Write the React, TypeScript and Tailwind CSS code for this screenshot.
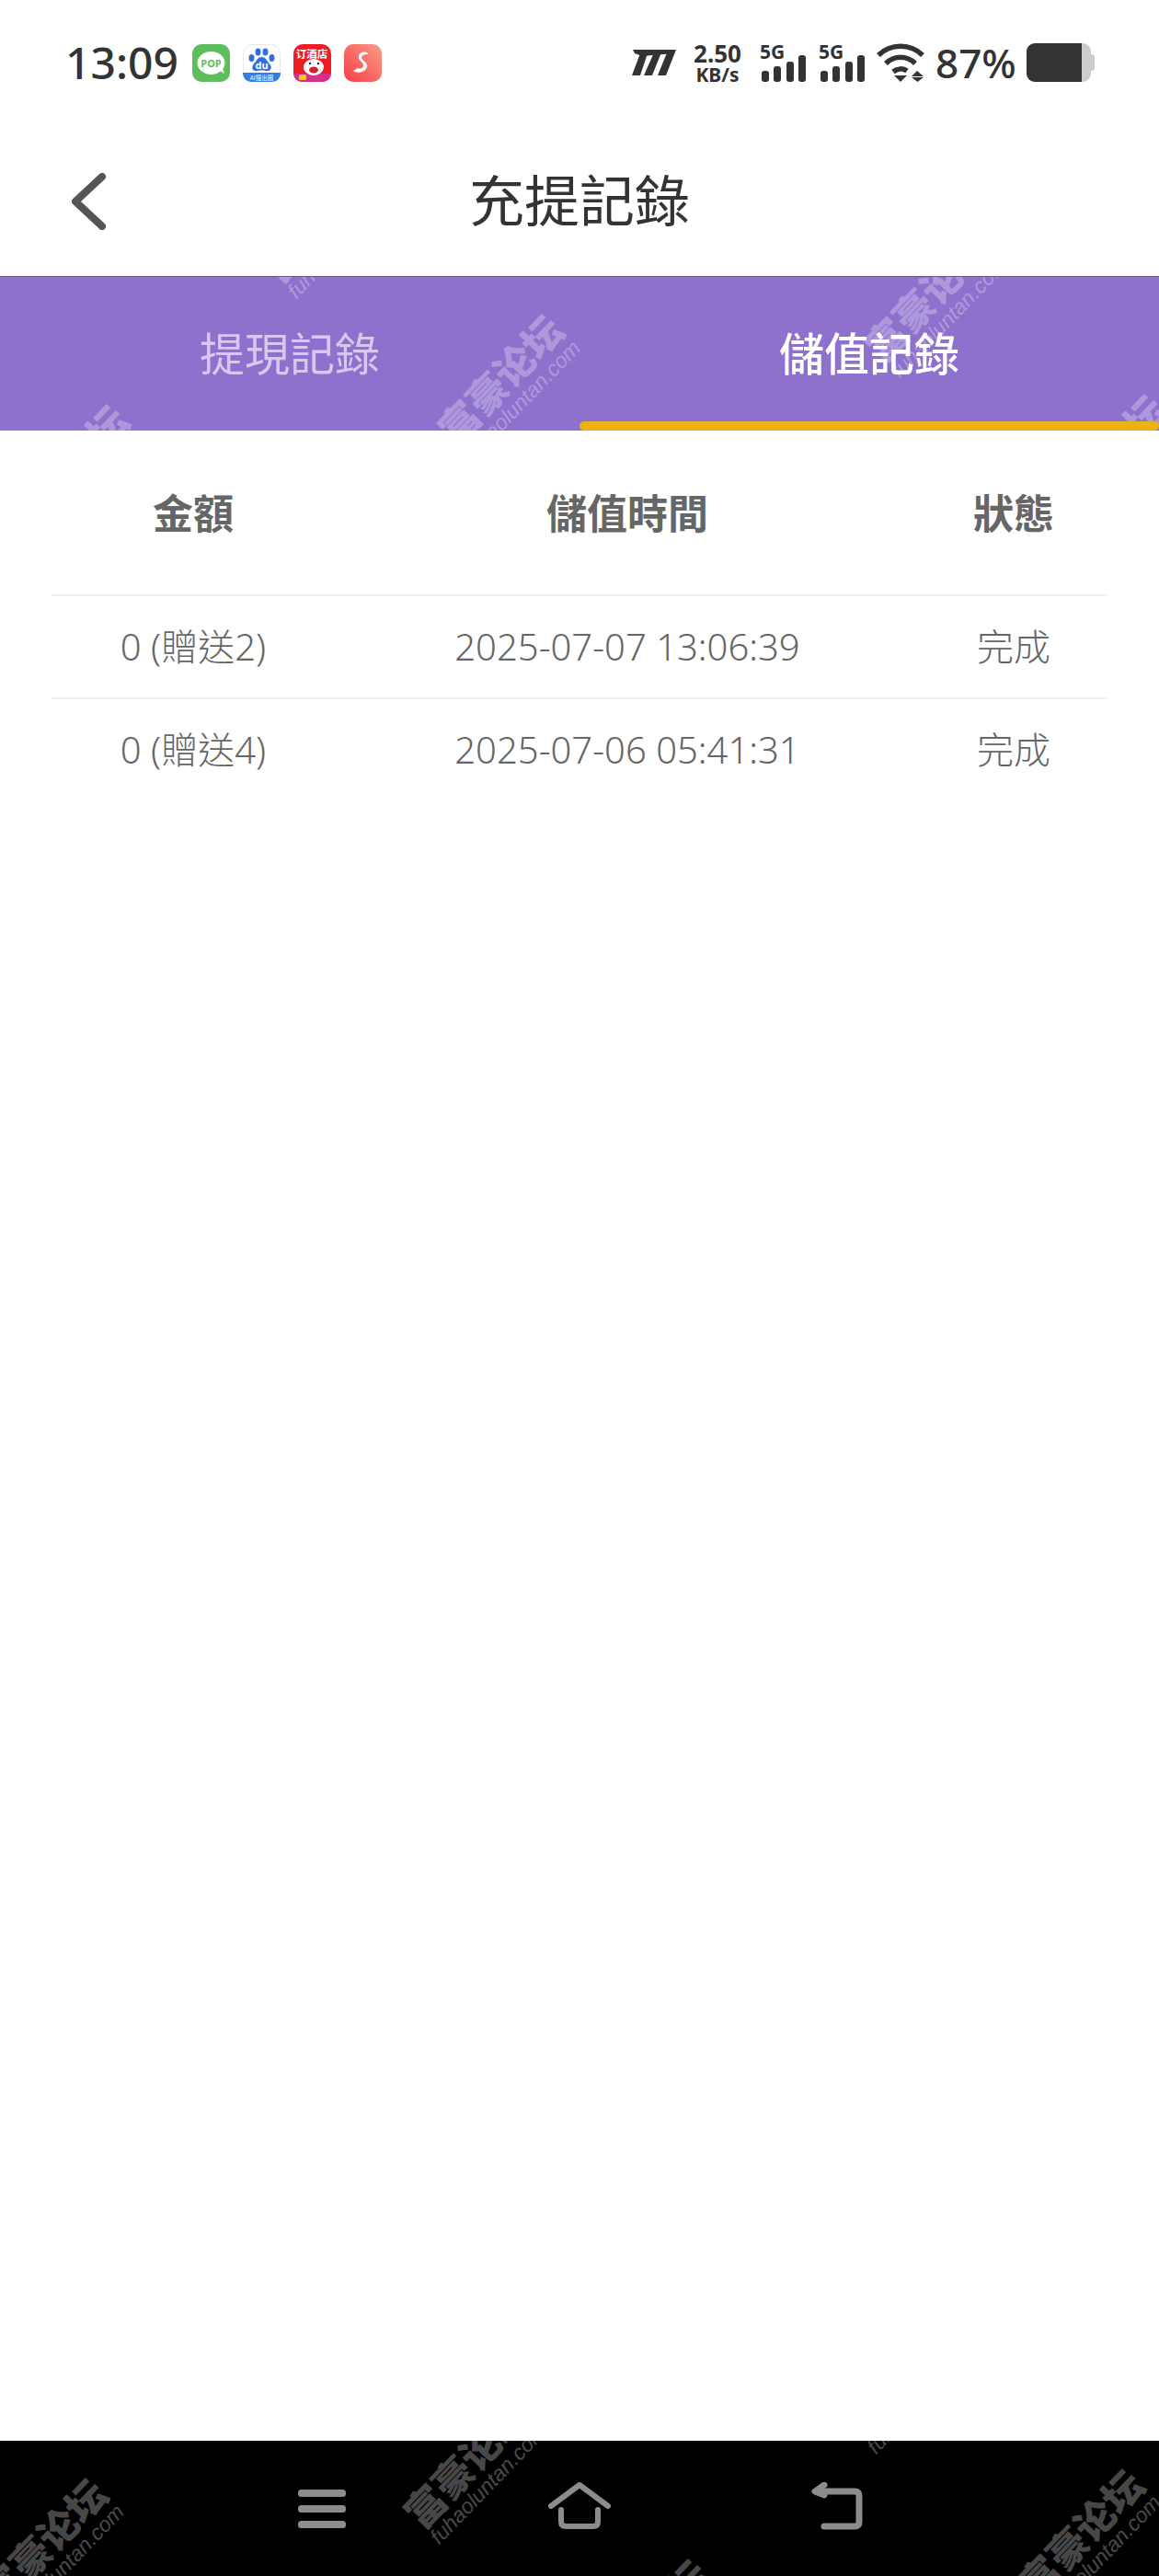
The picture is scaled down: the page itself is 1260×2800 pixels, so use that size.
const records = [
  { amount: "0 (贈送2)", time: "2025-07-07 13:06:39", status: "完成" },
  { amount: "0 (贈送4)", time: "2025-07-06 05:41:31", status: "完成" },
];

function Watermark({ className }: { className: string }) {
  return (
    <div
      className={`pointer-events-none absolute flex w-[190px] -translate-x-1/2 -translate-y-1/2 -rotate-[46deg] flex-col items-center whitespace-nowrap text-white/30 ${className}`}
    >
      <span className="text-[43px] leading-[46px] font-black font-['Noto_Sans_CJK_SC',sans-serif]">富豪论坛</span>
      <span className="text-[23px] leading-[24px] italic font-['Liberation_Sans',sans-serif]">fuhaoluntan.com</span>
    </div>
  );
}

function Signal() {
  return (
    <svg width="50" height="42" viewBox="0 0 50 42" fill="#333">
      <text x="0" y="17" fontSize="21" fontWeight="700" fontFamily="Noto Sans, sans-serif">
        5G
      </text>
      <rect x="2" y="30" width="8" height="12" rx="3" />
      <rect x="15" y="25" width="8" height="17" rx="3" />
      <rect x="29" y="20" width="8" height="22" rx="3" />
      <rect x="42" y="13" width="8" height="29" rx="3" />
    </svg>
  );
}

function AppIcons() {
  return (
    <div className="ml-[15px] flex items-center gap-[14px]">
      <svg width="41" height="41" viewBox="0 0 41 41">
        <rect width="41" height="41" rx="10" fill="#5dbf5c" />
        <ellipse cx="20.5" cy="20.5" rx="15" ry="12.5" fill="#fff" />
        <path d="M29 28l6 4-3-8z" fill="#fff" />
        <text x="20.5" y="25" textAnchor="middle" fontSize="11" fontWeight="700" fill="#5dbf5c" fontFamily="Noto Sans, sans-serif">
          POP
        </text>
      </svg>
      <svg width="41" height="41" viewBox="0 0 41 41">
        <rect x="0.5" y="0.5" width="40" height="40" rx="10" fill="#fff" stroke="#e8e8ee" />
        <path d="M0 31h41v1a9 9 0 0 1-9 9H9a9 9 0 0 1-9-9z" fill="#2f7de8" />
        <ellipse cx="9.5" cy="15" rx="3" ry="4" fill="#2f6fe4" />
        <ellipse cx="16.5" cy="8.5" rx="3" ry="4" fill="#2f6fe4" />
        <ellipse cx="24.5" cy="8.5" rx="3" ry="4" fill="#2f6fe4" />
        <ellipse cx="31.5" cy="15" rx="3" ry="4" fill="#2f6fe4" />
        <path d="M20.5 14c5 0 6 5 9 8 3 4 0 8-4 7-3-.6-7-.6-10 0-4 1-7-3-4-7 3-3 4-8 9-8z" fill="#2f6fe4" />
        <text x="20.5" y="27" textAnchor="middle" fontSize="11" fontWeight="700" fill="#fff" fontFamily="Noto Sans, sans-serif">
          du
        </text>
        <text x="20.5" y="39" textAnchor="middle" fontSize="6.5" fill="#fff" fontFamily="Noto Sans CJK SC, sans-serif">
          AI搜出圈
        </text>
      </svg>
      <svg width="41" height="41" viewBox="0 0 41 41">
        <rect width="41" height="41" rx="10" fill="#ee1c25" />
        <path d="M0 32h41v0a9 9 0 0 1-9 9H9a9 9 0 0 1-9-9z" fill="#d4328a" />
        <text x="20" y="15" textAnchor="middle" fontSize="11.5" fontWeight="700" fill="#fff" fontFamily="Noto Sans CJK SC, sans-serif">
          订酒店
        </text>
        <ellipse cx="22" cy="25" rx="11" ry="9" fill="#fff" />
        <ellipse cx="22" cy="28" rx="5" ry="3.5" fill="#d81e2a" />
        <circle cx="18" cy="21" r="1.2" fill="#222" />
        <circle cx="27" cy="21" r="1.2" fill="#222" />
        <rect x="6" y="33" width="8" height="6" rx="1.5" fill="#f4c430" />
      </svg>
      <svg width="41" height="41" viewBox="0 0 41 41">
        <defs>
          <linearGradient id="redS" x1="0" y1="1" x2="1" y2="0">
            <stop offset="0" stopColor="#f23f4a" />
            <stop offset="1" stopColor="#fb9d85" />
          </linearGradient>
        </defs>
        <rect width="41" height="41" rx="10" fill="url(#redS)" />
        <path d="M27 11c-3-4-10-3-11 2-1 4 4 6 5 9 1 3-3 6-6 4l-5 3c4 3 13 2 15-4 1-5-5-7-6-10-.5-2 4-5 8-4z" fill="#fff" />
      </svg>
    </div>
  );
}

function StatusBar() {
  return (
    <div className="flex h-[136px] items-center justify-between pl-[71px] pr-[70px] text-[#333]">
      <div className="flex items-center">
        <span className="text-[48px] leading-none font-medium font-['Noto_Sans',sans-serif]">13:09</span>
        <AppIcons />
      </div>
      <div className="flex items-center">
        <svg width="48" height="28" viewBox="0 0 48 28" fill="#333">
          <polygon points="1,0 47,0 46,4 11,7 3,4" />
          <polygon points="9,4 17,4 9,28 0,28" />
          <polygon points="24,3 32,3 22,28 13,28" />
          <polygon points="39,1 48,0 37,28 28,28" />
        </svg>
        <div className="ml-[19px] flex w-[52px] flex-col items-center font-bold font-['Noto_Sans',sans-serif]">
          <span className="text-[26px] leading-[26px]">2.50</span>
          <span className="text-[21px] leading-[20px]">KB/s</span>
        </div>
        <div className="ml-[20px]">
          <Signal />
        </div>
        <div className="ml-[14px]">
          <Signal />
        </div>
        <svg className="ml-[13px]" width="52" height="42" viewBox="0 0 52 42" fill="none" stroke="#333" strokeWidth="5.5">
          <path d="M2 13C15 0 37 0 50 13" />
          <path d="M10 22c9-9 23-9 32 0" />
          <path d="M18 31c5-4 11-4 15-1" />
          <polygon points="19,35 33,35 26,42" fill="#333" stroke="none" />
          <polygon points="44,30 51,36 38,36" fill="#333" stroke="none" />
          <polygon points="38,37 51,37 44.5,42" fill="#333" stroke="none" />
        </svg>
        <span className="ml-[12px] w-[87px] text-[44px] leading-none font-medium font-['Noto_Sans',sans-serif]">87%</span>
        <div className="ml-[12px] flex h-[42px] w-[74px] items-center">
          <div className="flex h-full w-[70px] overflow-hidden rounded-[9px] bg-[#ccc]">
            <div className="h-full w-[60px] bg-[#333]" />
          </div>
          <div className="h-[18px] w-[4px] rounded-r-[3px] bg-[#ccc]" />
        </div>
      </div>
    </div>
  );
}

function Header() {
  return (
    <div className="relative flex h-[165px] items-center justify-center border-b border-[#6b5b88] bg-white">
      <button type="button" aria-label="返回" className="absolute left-[76px] top-[52px]">
        <svg width="40" height="62" viewBox="0 0 40 62" fill="none" stroke="#555" strokeWidth="8" strokeLinecap="round" strokeLinejoin="round">
          <path d="M35 4L6 31l29 27" />
        </svg>
      </button>
      <h1 className="text-[60px] leading-none font-normal text-[#333]">充提記錄</h1>
    </div>
  );
}

function Tabs() {
  return (
    <div className="relative flex h-[167px] overflow-hidden bg-[#8e70cd]">
      <Watermark className="left-[359px] top-[-58px]" />
      <Watermark className="left-[78px] top-[216px]" />
      <Watermark className="left-[551px] top-[118px]" />
      <Watermark className="left-[1015px] top-[28px]" />
      <Watermark className="left-[1206px] top-[205px]" />
      <div className="relative flex w-[630px] items-center justify-center text-[49px] text-[#d6c8f1]">提現記錄</div>
      <div className="relative flex w-[630px] items-center justify-center text-[49px] font-medium text-white">
        儲值記錄
        <div className="absolute inset-x-0 bottom-0 h-[10px] rounded-full bg-[#ebb215]" />
      </div>
    </div>
  );
}

function RecordsTable() {
  return (
    <div className="flex-1 bg-white px-[56px] text-[#666]">
      <div className="grid h-[178px] grid-cols-[308px_636px_204px] items-center pt-[2px] text-center text-[44px] font-bold">
        <span>金額</span>
        <span>儲值時間</span>
        <span>狀態</span>
      </div>
      {records.map((r) => (
        <div
          key={r.time}
          className="grid h-[112px] grid-cols-[308px_636px_204px] items-center border-t-2 border-[#f0f0f0] text-center text-[40px] font-light"
        >
          <span>{r.amount}</span>
          <span>{r.time}</span>
          <span>{r.status}</span>
        </div>
      ))}
    </div>
  );
}

function NavBar() {
  return (
    <div className="relative flex h-[147px] justify-center overflow-hidden bg-black pt-[45px]">
      <Watermark className="left-[55px] top-[118px]" />
      <Watermark className="left-[514px] top-[31px]" />
      <Watermark className="left-[1182px] top-[108px]" />
      <Watermark className="left-[710px] top-[206px]" />
      <Watermark className="left-[989px] top-[-67px]" />
      <div className="relative flex w-[280px] justify-center">
        <svg width="52" height="52" viewBox="0 0 52 52" fill="#8c8c8c">
          <rect x="0" y="8" width="52" height="8" rx="3.5" />
          <rect x="0" y="25" width="52" height="8" rx="3.5" />
          <rect x="0" y="42" width="52" height="8" rx="3.5" />
        </svg>
      </div>
      <div className="relative flex w-[280px] justify-center">
        <svg width="68" height="52" viewBox="0 0 68 52" fill="none" stroke="#8c8c8c" strokeWidth="6" strokeLinecap="round" strokeLinejoin="round">
          <path d="M3 26L34 3l31 23" />
          <path d="M14 30v13q0 5 5 5h30q5 0 5-5V30" />
        </svg>
      </div>
      <div className="relative flex w-[280px] justify-center">
        <svg width="56" height="52" viewBox="0 0 56 52" fill="none" stroke="#8c8c8c" strokeWidth="7" strokeLinecap="round" strokeLinejoin="round">
          <path d="M14 3L4 10l10 4" />
          <path d="M6 10h41q5 0 5 5v28q0 5-5 5H14" />
        </svg>
      </div>
    </div>
  );
}

export default function App() {
  return (
    <div className="flex h-[2800px] w-[1260px] flex-col bg-white font-['Noto_Sans','Noto_Sans_CJK_TC',sans-serif]">
      <StatusBar />
      <Header />
      <Tabs />
      <RecordsTable />
      <NavBar />
    </div>
  );
}
